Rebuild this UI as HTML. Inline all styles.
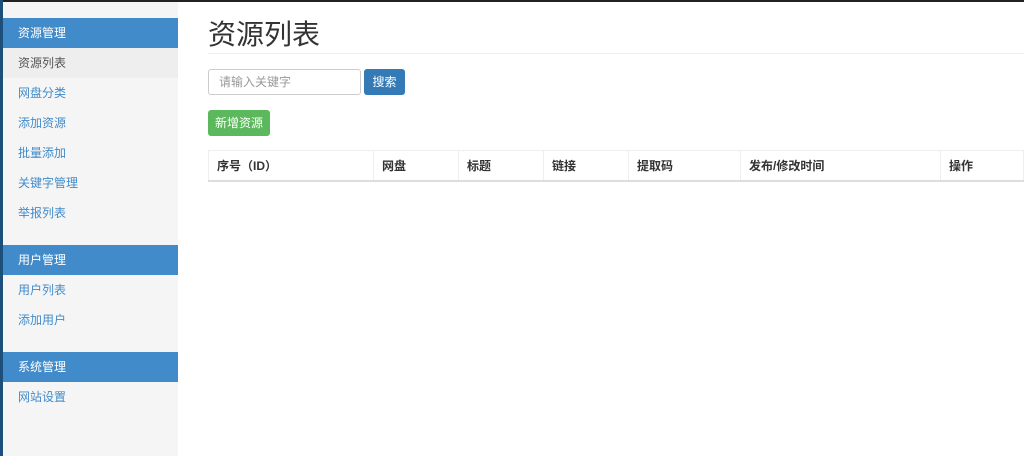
<!DOCTYPE html>
<html><head><meta charset="utf-8"><style>
*{box-sizing:border-box;margin:0;padding:0}
body{width:1024px;height:456px;overflow:hidden;background:#fff;font-family:"Liberation Sans","Noto Sans CJK SC",sans-serif;font-size:12px;color:#333;position:relative}
.top{position:absolute;left:0;top:0;width:1024px;height:2px;background:#222}
.strip{position:absolute;left:0;top:0;width:3px;height:456px;background:#1d4f7c}
.side{position:absolute;left:3px;top:2px;width:175px;height:454px;background:#f5f5f5}
.h,.i{position:absolute;left:0;width:175px;height:30px;line-height:30px;padding-left:15px}
.h{background:#428bca;color:#fff}
.i{color:#428bca}
.i.a{background:#eee;color:#555}
h1{position:absolute;left:208px;top:13px;font-size:28px;font-weight:normal;color:#333}
.line{position:absolute;left:208px;top:53px;right:0;height:1px;background:#eee}
.inp{position:absolute;left:208px;top:69px;width:153px;height:26px;border:1px solid #ccc;border-radius:3px;color:#999;padding-left:10px;line-height:24px}
.btn{position:absolute;color:#fff;border-radius:3px;text-align:center;line-height:26px;height:26px}
table{position:absolute;left:208px;top:150px;width:816px;border-collapse:collapse}
th{text-align:left;height:30px;border:1px solid #eee;border-bottom:2px solid #ddd;padding-left:8px;font-weight:bold;font-size:12px}
</style></head><body>
<div class="top"></div><div class="strip"></div>
<div class="side">
<div class="h" style="top:16px">资源管理</div>
<div class="i a" style="top:46px">资源列表</div>
<div class="i" style="top:76px">网盘分类</div>
<div class="i" style="top:106px">添加资源</div>
<div class="i" style="top:136px">批量添加</div>
<div class="i" style="top:166px">关键字管理</div>
<div class="i" style="top:196px">举报列表</div>
<div class="h" style="top:243px">用户管理</div>
<div class="i" style="top:273px">用户列表</div>
<div class="i" style="top:303px">添加用户</div>
<div class="h" style="top:350px">系统管理</div>
<div class="i" style="top:380px">网站设置</div>
</div>
<h1>资源列表</h1>
<div class="line"></div>
<div class="inp">请输入关键字</div>
<div class="btn" style="left:364px;top:69px;width:41px;background:#337ab7">搜索</div>
<div class="btn" style="left:208px;top:110px;width:62px;background:#5cb85c">新增资源</div>
<table><tr>
<th style="width:165px">序号（ID）</th><th style="width:85px">网盘</th><th style="width:85px">标题</th><th style="width:85px">链接</th><th style="width:112px">提取码</th><th style="width:200px">发布/修改时间</th><th>操作</th>
</tr></table>
</body></html>
